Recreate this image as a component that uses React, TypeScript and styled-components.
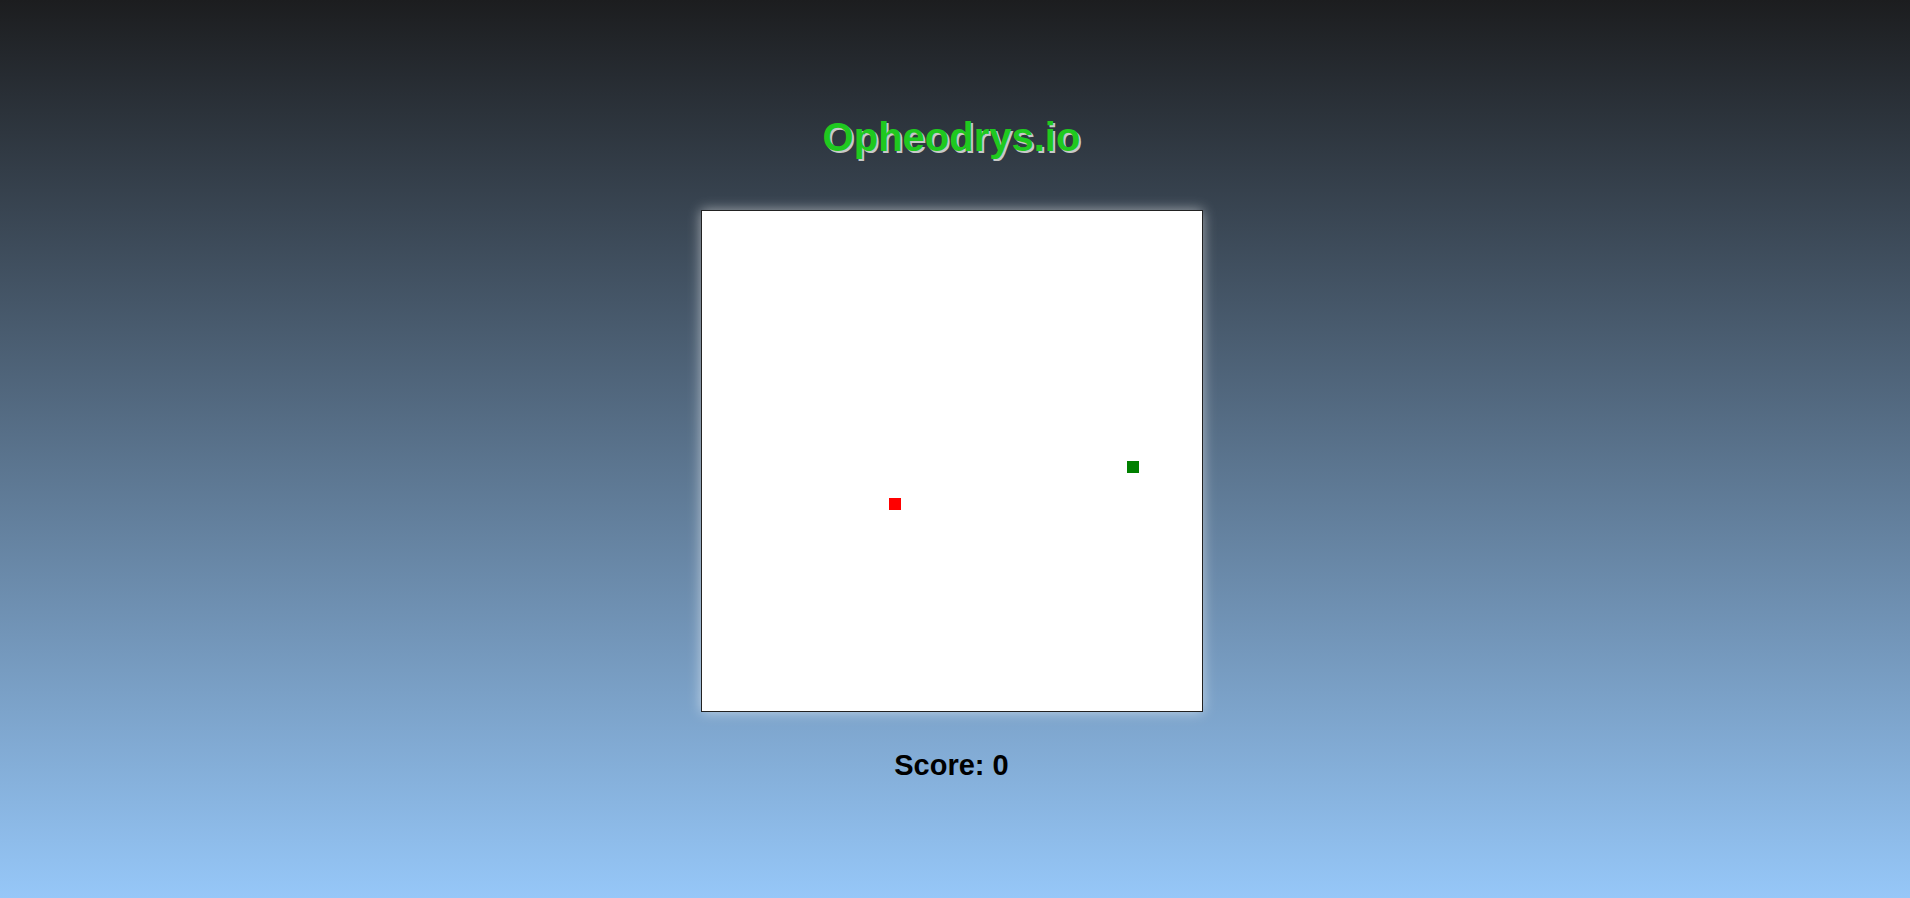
import React from "react";
import styled, { createGlobalStyle } from "styled-components";

const GlobalStyle = createGlobalStyle`
  html, body {
    margin: 0;
    padding: 0;
  }
  body {
    font-family: "Liberation Sans", Arial, sans-serif;
    background: linear-gradient(to bottom, #1c1d1f 0%, #96c7f8 100%);
    min-height: 100vh;
  }
`;

const Page = styled.main`
  min-height: 100vh;
  box-sizing: border-box;
  display: flex;
  flex-direction: column;
  align-items: center;
  padding: 114px 7px 0 0;
`;

const Title = styled.h1`
  margin: 0;
  font-size: 40px;
  line-height: 46px;
  font-weight: 700;
  color: #1fc91f;
  text-shadow: 2px 2px 0 #c8c8c8;
`;

const Board = styled.div`
  position: relative;
  margin-top: 50px;
  width: 500px;
  height: 500px;
  background: #ffffff;
  border: 1px solid #222;
  box-shadow: 0 0 12px rgba(255, 255, 255, 0.55);
`;

const Cell = styled.div<{ $color: string }>`
  position: absolute;
  width: 12px;
  height: 12px;
  background: ${(p) => p.$color};
`;

const Score = styled.div`
  margin-top: 37px;
  font-size: 29px;
  line-height: 33px;
  font-weight: 700;
  color: #000;
`;

export default function App() {
  return (
    <>
      <GlobalStyle />
      <Page>
        <Title>Opheodrys.io</Title>
        <Board>
          <Cell $color="#008000" style={{ left: 425, top: 250 }} />
          <Cell $color="#ff0000" style={{ left: 187, top: 287 }} />
        </Board>
        <Score>Score: 0</Score>
      </Page>
    </>
  );
}
